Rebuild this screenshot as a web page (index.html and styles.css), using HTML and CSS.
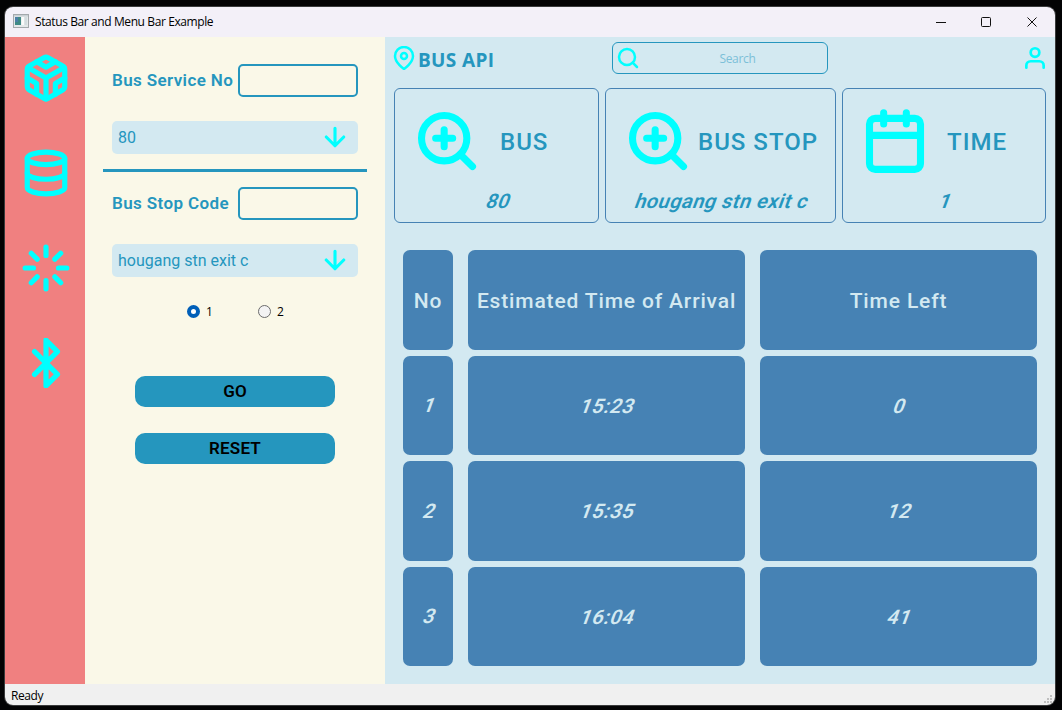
FILE: index.html
```html
<!DOCTYPE html>
<html lang="en">
<head>
<meta charset="utf-8">
<title>Status Bar and Menu Bar Example</title>
<link rel="stylesheet" href="styles.css">
</head>
<body>
<div class="window">
  <header class="titlebar">
    <svg class="app-icon" width="16" height="14" viewBox="0 0 16 14">
      <rect x=".5" y=".5" width="15" height="13" fill="#e4e8ea" stroke="#a3a8ac"/>
      <rect x="1" y="1" width="14" height="1.5" fill="#c9d0d4"/>
      <rect x="2" y="3" width="6" height="8" fill="#3f8a86"/>
      <rect x="2" y="3" width="3" height="5" fill="#4c7fa6"/>
      <rect x="8.5" y="3" width="2.5" height="8" fill="#fafafa"/>
      <rect x="11.5" y="3" width="2.5" height="8" fill="#d3dcdf"/>
    </svg>
    <span class="title">Status Bar and Menu Bar Example</span>
    <svg class="controls" width="101" height="12" viewBox="0 0 101 12">
      <path d="M0 6.5h10"/>
      <rect x="45.500" y="1.500" width="9" height="9" rx="1"/>
      <path d="M91.500 1.500l9 9M100.500 1.500l-9 9"/>
    </svg>
  </header>
  <main class="main">
    <nav class="rail">
      <svg class="icon" width="50" height="50" viewBox="0 0 24 24"><path d="M21 16V8a2 2 0 0 0-1-1.730l-7-4a2 2 0 0 0-2 0l-7 4A2 2 0 0 0 3 8v8a2 2 0 0 0 1 1.730l7 4a2 2 0 0 0 2 0l7-4A2 2 0 0 0 21 16z"/><path d="M7.500 4.210 12 6.810l4.500-2.600M7.500 19.790V14.600L3 12M21 12l-4.500 2.600v5.190M3.270 6.960 12 12.010l8.730-5.050M12 22.080V12"/></svg>
      <svg class="icon" width="50" height="50" viewBox="0 0 24 24"><ellipse cx="12" cy="5" rx="9" ry="3"/><path d="M21 12c0 1.660-4 3-9 3s-9-1.340-9-3"/><path d="M3 5v14c0 1.660 4 3 9 3s9-1.340 9-3V5"/></svg>
      <svg class="icon" width="50" height="50" viewBox="0 0 24 24"><path d="M12 2v4M12 18v4M4.930 4.930l2.830 2.830M16.240 16.240l2.830 2.830M2 12h4M18 12h4M4.930 19.070l2.830-2.830M16.240 7.760l2.830-2.830"/></svg>
      <svg class="icon" width="50" height="50" viewBox="0 0 24 24"><path d="M6.500 6.500l11 11L12 23V1l5.500 5.500-11 11"/></svg>
    </nav>

    <section class="form">
      <div class="field">
        <label class="label" for="service">Bus Service No</label>
        <input class="input" id="service" type="text">
      </div>
      <div class="combo">
        <span class="combo-text">80</span>
        <svg class="icon" width="30" height="30" viewBox="0 0 24 24"><path d="M12 5v14M19 12l-7 7-7-7"/></svg>
      </div>
      <hr class="rule">
      <div class="field">
        <label class="label" for="stop">Bus Stop Code</label>
        <input class="input" id="stop" type="text">
      </div>
      <div class="combo">
        <span class="combo-text">hougang stn exit c</span>
        <svg class="icon" width="30" height="30" viewBox="0 0 24 24"><path d="M12 5v14M19 12l-7 7-7-7"/></svg>
      </div>
      <div class="radios">
        <span class="radio"><i class="dot dot-on"></i>1</span>
        <span class="radio"><i class="dot"></i>2</span>
      </div>
      <button class="button" type="button">GO</button>
      <button class="button" type="button">RESET</button>
    </section>

    <section class="board">
      <div class="topbar">
        <div class="brand">
          <svg class="icon" width="24" height="24" viewBox="0 0 24 24"><path d="M21 10c0 7-9 13-9 13s-9-6-9-13a9 9 0 0 1 18 0z"/><circle cx="12" cy="10" r="3"/></svg>
          <span class="brand-text">BUS API</span>
        </div>
        <div class="search">
          <svg class="icon" width="24" height="24" viewBox="0 0 24 24"><circle cx="11" cy="11" r="8"/><path d="M21 21l-4.350-4.350"/></svg>
          <span class="search-text">Search</span>
        </div>
        <svg class="icon user" width="26" height="26" viewBox="0 0 24 24"><path d="M20 21v-2a4 4 0 0 0-4-4H8a4 4 0 0 0-4 4v2"/><circle cx="12" cy="7" r="4"/></svg>
      </div>

      <div class="cards">
        <article class="card">
          <div class="card-head">
            <svg class="icon" width="68" height="68" viewBox="0 0 24 24"><circle cx="11" cy="11" r="8"/><path d="M21 21l-4.350-4.350M11 8v6M8 11h6"/></svg>
            <h2 class="card-title title-bus">BUS</h2>
          </div>
          <p class="card-value"><span class="slant">80</span></p>
        </article>
        <article class="card">
          <div class="card-head">
            <svg class="icon" width="68" height="68" viewBox="0 0 24 24"><circle cx="11" cy="11" r="8"/><path d="M21 21l-4.350-4.350M11 8v6M8 11h6"/></svg>
            <h2 class="card-title title-stop">BUS STOP</h2>
          </div>
          <p class="card-value"><span class="slant">hougang stn exit c</span></p>
        </article>
        <article class="card">
          <div class="card-head">
            <svg class="icon" width="68" height="68" viewBox="0 0 24 24"><rect x="3" y="4" width="18" height="18" rx="2"/><path d="M16 2v4M8 2v4M3 10h18"/></svg>
            <h2 class="card-title title-time">TIME</h2>
          </div>
          <p class="card-value"><span class="slant">1</span></p>
        </article>
      </div>

      <div class="table">
        <div class="cell head">No</div><div class="cell head">Estimated Time of Arrival</div><div class="cell head">Time Left</div>
        <div class="cell index"><span class="slant">1</span></div><div class="cell"><span class="slant">15:23</span></div><div class="cell"><span class="slant">0</span></div>
        <div class="cell index"><span class="slant">2</span></div><div class="cell"><span class="slant">15:35</span></div><div class="cell"><span class="slant">12</span></div>
        <div class="cell index"><span class="slant">3</span></div><div class="cell"><span class="slant">16:04</span></div><div class="cell"><span class="slant">41</span></div>
      </div>
    </section>
  </main>
  <footer class="statusbar">
    <span class="status">Ready</span>
    <svg class="grip" width="9" height="9" viewBox="0 0 9 9"><path d="M6 0h2v2h-2zM3 3h2v2h-2zM6 3h2v2h-2zM0 6h2v2h-2zM3 6h2v2h-2zM6 6h2v2h-2z"/></svg>
  </footer>
</div>
</body>
</html>
```
FILE: styles.css
```css
* { box-sizing: border-box; }

body {
  margin: 0;
  height: 710px;
  padding: 7px 7px 5px 5px;
  overflow: hidden;
  background: #030304;
  font-family: Roboto, "Liberation Sans", sans-serif;
  color: #2596be;
}

.window {
  display: flex;
  flex-direction: column;
  width: 1050px;
  height: 698px;
  border-radius: 8px;
  overflow: hidden;
  box-shadow: 0 0 0 1px #3a3b3c;
}

.icon {
  display: block;
  flex: none;
  fill: none;
  stroke: #00ffff;
  stroke-width: 2.5;
  stroke-linecap: round;
  stroke-linejoin: round;
}

.titlebar {
  display: flex;
  align-items: center;
  flex: none;
  height: 30px;
  padding: 0 18px 0 8px;
  background: #f3f0f8;
  color: #000;
}

.app-icon { margin: -2px 6px 0 0; }

.title {
  flex: 1;
  font: 12px/30px "Open Sans", sans-serif;
  letter-spacing: -0.4px;
}

.controls {
  margin-top: -1px;
  fill: none;
  stroke: #111;
  stroke-width: 1;
}

.main {
  display: flex;
  flex: 1;
}

.rail {
  display: flex;
  flex-direction: column;
  gap: 45px;
  width: 80px;
  padding: 16px 0 0 16px;
  background: #f08080;
}

.form {
  display: flex;
  flex-direction: column;
  width: 300px;
  padding: 27px 18px 0;
  background: #faf8e8;
}

.field {
  display: flex;
  align-items: center;
  justify-content: space-between;
  height: 33px;
  margin: 0 9px;
}

.label {
  padding-bottom: 2px;
  font-size: 17px;
  font-weight: 600;
  letter-spacing: 0.38px;
  white-space: nowrap;
}

.input {
  width: 120px;
  height: 33px;
  border: 2px solid #2596be;
  border-radius: 5px;
  background: transparent;
}

.combo {
  display: flex;
  align-items: center;
  justify-content: space-between;
  height: 33px;
  margin: 24px 9px 0;
  padding: 0 8px 0 6px;
  border-radius: 5px;
  background: #d3e9f1;
  font-size: 16px;
}

.combo .icon { margin-bottom: 1px; }

.rule {
  width: 264px;
  height: 3px;
  margin: 15px 0;
  border: 0;
  background: #2596be;
}

.radios {
  display: flex;
  gap: 45px;
  margin: 27px 0 57px 84px;
  height: 15px;
}

.radio {
  display: flex;
  align-items: center;
  gap: 6px;
  font: 12px/15px "Open Sans", sans-serif;
  color: #000;
}

.dot {
  width: 13px;
  height: 13px;
  border: 1px solid #6b6b6b;
  border-radius: 50%;
  background: #f3f3f3;
}

.dot-on {
  border: 4px solid #005fb8;
  background: #fff;
}

.button {
  width: 200px;
  height: 31px;
  margin: 0 0 26px 32px;
  padding: 0 0 2px 0;
  border: 0;
  border-radius: 10px;
  background: #2596be;
  color: #000;
  font: 600 17px Roboto, sans-serif;
  letter-spacing: 0.2px;
}

.board {
  display: flex;
  flex-direction: column;
  width: 670px;
  background: #d3e9f1;
}

.topbar {
  display: grid;
  grid-template-columns: 220px 216px 1fr;
  height: 42px;
  margin: 0 7px;
  padding-top: 5px;
}

.brand {
  display: flex;
  align-items: flex-start;
  gap: 2px;
  padding-top: 4px;
}

.brand-text {
  padding-top: 2px;
  font: 700 19px/24px "Open Sans", sans-serif;
  letter-spacing: 0.35px;
}

.search {
  display: flex;
  align-items: center;
  height: 32px;
  padding: 0 3px;
  border: 1px solid #2596be;
  border-radius: 6px;
}

.search-text {
  flex: 1;
  padding-left: 11px;
  text-align: center;
  font: 12px "Open Sans", sans-serif;
  letter-spacing: -0.3px;
  color: #7cc0d8;
}

.user {
  justify-self: end;
  margin-top: 3px;
}

.cards {
  display: grid;
  grid-template-columns: 205px 231px 204px;
  gap: 6px;
  margin: 9px 9px 0;
}

.card {
  height: 135px;
  border: 1px solid #4682b4;
  border-radius: 6px;
}

.card-head {
  display: flex;
  align-items: center;
  height: 68px;
  margin-top: 18px;
  padding-left: 18px;
}

.card-title {
  margin: 0;
  padding-top: 2px;
  font-size: 24px;
  font-weight: 500;
  letter-spacing: 1px;
  white-space: nowrap;
}

.title-bus { margin-left: 19px; }
.title-stop { margin-left: 6px; }
.title-time { margin-left: 18px; }

.card-value {
  margin: 14px 0 0;
  padding-left: 4px;
  text-align: center;
  font-size: 20px;
  line-height: 24px;
  font-weight: 600;
  letter-spacing: 0.45px;
}

.slant {
  display: inline-block;
  transform: skewX(-20deg);
}

.table {
  display: grid;
  grid-template-columns: 50px 277px 277px;
  grid-template-rows: 100px 99px 100px 99px;
  gap: 6px 15px;
  margin: 27px 18px 0;
}

.cell {
  display: flex;
  align-items: center;
  justify-content: center;
  padding-left: 4px;
  border-radius: 7px;
  background: #4682b4;
  color: #d3e9f1;
  font-size: 20px;
  font-weight: 600;
  letter-spacing: 0.6px;
}

.index { padding-bottom: 1px; }

.head {
  padding: 2px 0 0;
  font-size: 21px;
  font-weight: 500;
  letter-spacing: 0.85px;
}

.statusbar {
  display: flex;
  align-items: center;
  justify-content: space-between;
  flex: none;
  height: 21px;
  padding: 0 2px 0 6px;
  background: #f0f0f0;
  color: #000;
}

.status {
  padding-top: 2px;
  font: 12px/21px "Open Sans", sans-serif;
  letter-spacing: -0.4px;
}

.grip {
  align-self: flex-end;
  margin-bottom: 1px;
  fill: #bfbfbf;
}
```
